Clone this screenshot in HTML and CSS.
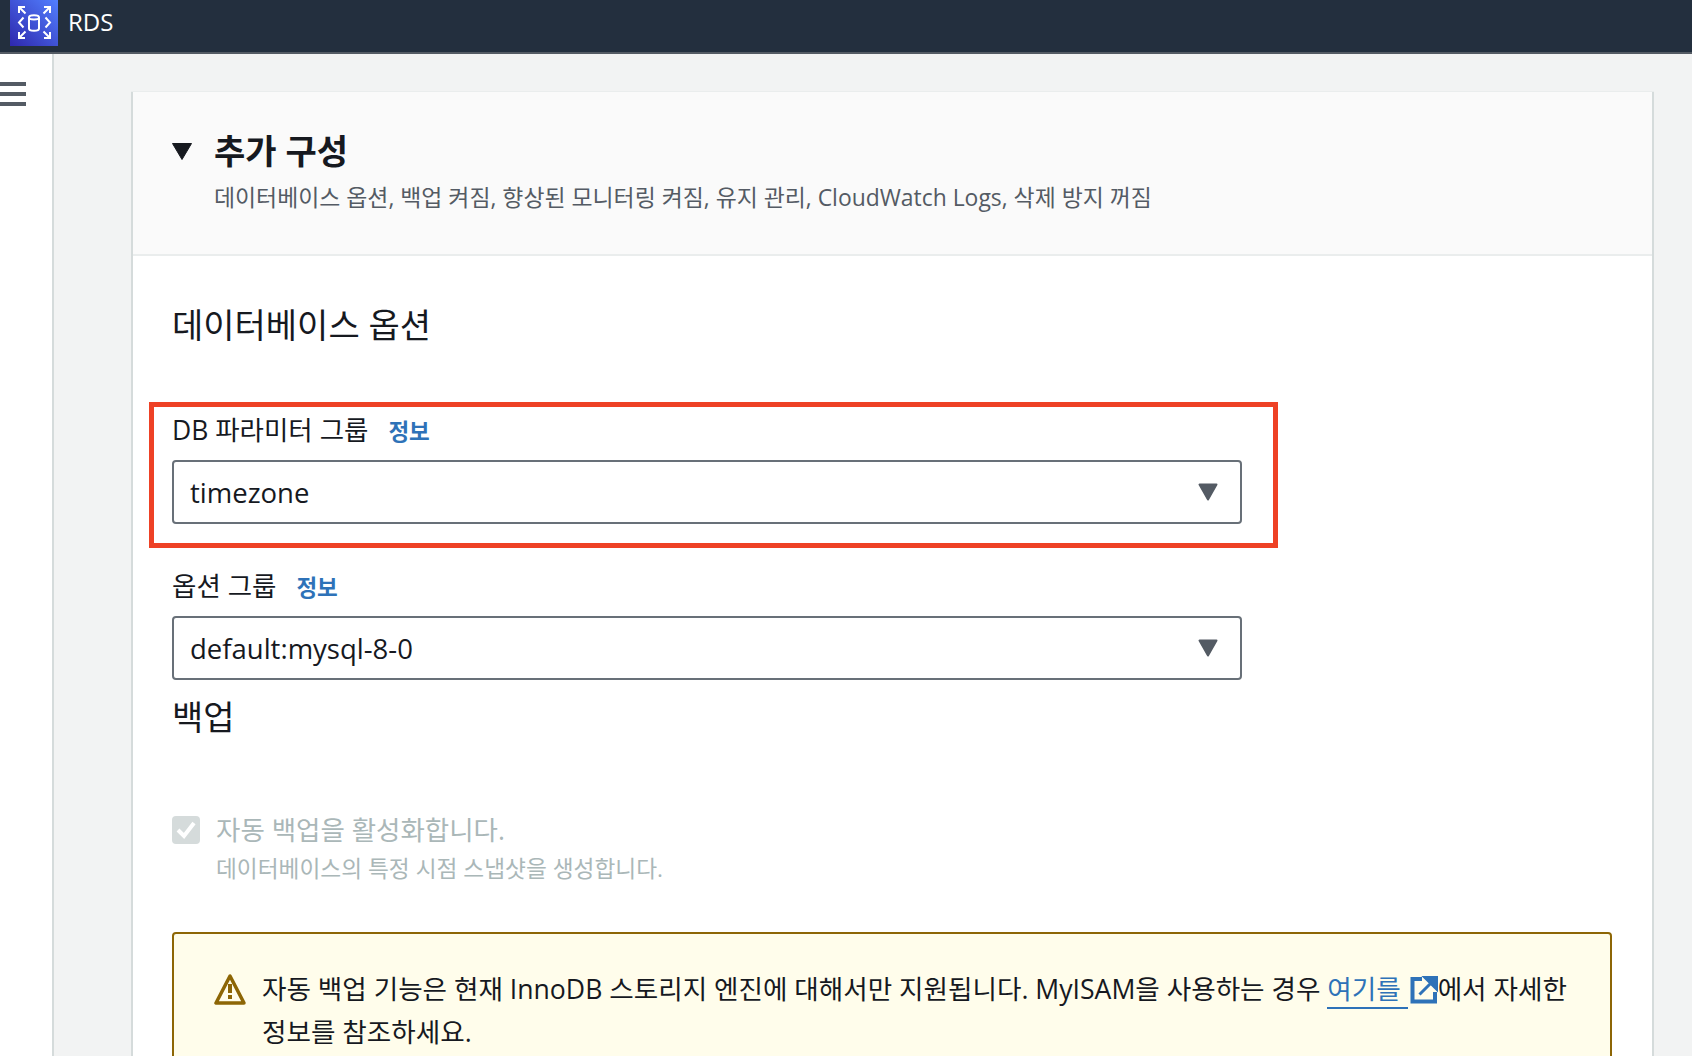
FILE: index.html
```html
<!DOCTYPE html>
<html lang="ko">
<head>
<meta charset="utf-8">
<title>RDS</title>
<link rel="stylesheet" href="styles.css">
</head>
<body>
<header class="topbar">
  <div class="logo">
    <svg width="48" height="46" viewBox="0 0 48 46">
      <defs><linearGradient id="g" x1="0" y1="1" x2="1" y2="0"><stop offset="0" stop-color="#2e27ad"/><stop offset="1" stop-color="#527fff"/></linearGradient></defs>
      <rect width="48" height="46" fill="url(#g)"/>
      <g fill="none" stroke="#fff" stroke-width="2">
        <path d="M9 13V7h6M9 7l6.500 6.500M40 13V7h-6M40 7l-6.500 6.500M9 32v6h6M9 38l6.500-6.500M40 32v6h-6M40 38l-6.500-6.500"/>
        <path d="M13.500 17.500L9 22.500l4.500 5M35.500 17.500L40 22.500l-4.500 5"/>
        <path d="M19 17.500c0-3 10-3 10 0v11c0 3-10 3-10 0zM19 17.500c0 2.500 10 2.500 10 0"/>
      </g>
    </svg>
  </div>
  <span class="service">RDS</span>
</header>
<div class="layout">
  <aside class="side">
    <div class="burger"><span></span><span></span><span></span></div>
  </aside>
  <main class="main">
    <section class="card">
      <div class="card-head">
        <svg class="caret" width="20" height="17" viewBox="0 0 20 17"><path d="M.5 .5h19L10 16.500z" fill="#16191f" stroke="#16191f" stroke-width="1" stroke-linejoin="round"/></svg>
        <div>
          <h2 class="title">추가 구성</h2>
          <p class="summary">데이터베이스 옵션, 백업 켜짐, 향상된 모니터링 켜짐, 유지 관리, CloudWatch Logs, 삭제 방지 꺼짐</p>
        </div>
      </div>
      <div class="card-body">
        <h3 class="section">데이터베이스 옵션</h3>
        <div class="field field-first">
          <div class="marker"></div>
          <div class="label">DB 파라미터 그룹<a class="info">정보</a></div>
          <div class="select"><span>timezone</span><svg width="20" height="18" viewBox="0 0 20 18"><path d="M1.500 1.500h17L10 16.500z" fill="#545b64" stroke="#545b64" stroke-width="2" stroke-linejoin="round"/></svg></div>
        </div>
        <div class="field field-second">
          <div class="label">옵션 그룹<a class="info">정보</a></div>
          <div class="select"><span>default:mysql-8-0</span><svg width="20" height="18" viewBox="0 0 20 18"><path d="M1.500 1.500h17L10 16.500z" fill="#545b64" stroke="#545b64" stroke-width="2" stroke-linejoin="round"/></svg></div>
        </div>
        <h3 class="section section-backup">백업</h3>
        <div class="check-row">
          <div class="checkbox"><svg width="28" height="28" viewBox="0 0 28 28"><path d="M6 14l6 6 10-13" fill="none" stroke="#fff" stroke-width="4"/></svg></div>
          <div>
            <div class="check-title">자동 백업을 활성화합니다.</div>
            <div class="check-desc">데이터베이스의 특정 시점 스냅샷을 생성합니다.</div>
          </div>
        </div>
        <div class="alert">
          <svg class="warn" width="32" height="32" viewBox="0 0 32 32"><path d="M16 3L2 30h28z" fill="none" stroke="#8d6605" stroke-width="3.500" stroke-linejoin="round"/><path d="M14 11h4v9h-4zM14 22h4v4h-4z" fill="#8d6605"/></svg>
          <p class="alert-text">자동 백업 기능은 현재 InnoDB 스토리지 엔진에 대해서만 지원됩니다. MyISAM을 사용하는 경우 <a class="ext">여기를 </a><svg class="ext-icon" width="28" height="28" viewBox="0 0 28 28"><path d="M12 3H2.500v22.500H25V16" fill="none" stroke="#2e72b8" stroke-width="4"/><path d="M15 1.500h11.500V13zM9.500 18.500L20 8" fill="#2e72b8" stroke="#2e72b8" stroke-width="3"/></svg>에서 자세한 정보를 참조하세요.</p>
        </div>
      </div>
    </section>
  </main>
</div>
</body>
</html>
```
FILE: styles.css
```css
* { box-sizing: border-box; }
html, body { margin: 0; height: 1056px; overflow: hidden; }
body {
  font-family: "Open Sans", "Noto Sans CJK KR", sans-serif;
  color: #16191f;
  background: #f2f3f3;
  display: flex;
  flex-direction: column;
}
h2, h3, p { margin: 0; font-weight: 400; }

.topbar {
  height: 54px;
  flex: none;
  display: flex;
  background: #232f3e;
  border-bottom: 2px solid #545b64;
  padding-left: 10px;
}
.logo { height: 46px; }
.logo svg { display: block; }
.service { margin-left: 10px; color: #fff; font-size: 24px; line-height: 44px; }

.layout { flex: 1; display: flex; min-height: 0; }
.side {
  width: 54px;
  flex: none;
  background: #fff;
  border-right: 2px solid #d5dbdb;
  padding-top: 28px;
}
.burger { width: 26px; display: flex; flex-direction: column; gap: 6px; }
.burger span { height: 4px; background: #545b64; }

.main { flex: 1; padding: 38px 38px 0 77px; min-width: 0; }
.card {
  background: #fff;
  border-left: 2px solid #d5dbdb;
  border-right: 2px solid #d5dbdb;
  box-shadow: 0 -1px 0 #eaeded;
  height: 1100px;
}
.card-head {
  height: 164px;
  background: #fafafa;
  border-bottom: 2px solid #eaeded;
  padding: 37px 39px 0;
  display: flex;
  gap: 22px;
}
.caret { margin-top: 14px; flex: none; }
.title { font-size: 34px; font-weight: 700; line-height: 44px; }
.summary { font-size: 22.900px; line-height: 30px; margin-top: 10px; color: #545b64; }

.card-body { padding: 0 39px; }
.section { font-size: 34px; line-height: 44px; }
.card-body > .section:first-child { padding-top: 47px; height: 91px; }

.field { position: relative; width: 1070px; }
.field-first { margin-top: 65px; }
.field-second { margin-top: 44px; }
.marker {
  position: absolute;
  left: -23px;
  right: -36px;
  top: -10px;
  bottom: -24px;
  border: 5px solid #ee4125;
  pointer-events: none;
}
.label { font-size: 26.5px; line-height: 36px; height: 48px; }
.info { margin-left: 20px; font-size: 22.500px; font-weight: 700; color: #2e72b8; }
.select {
  height: 64px;
  background: #fff;
  border: 2px solid #687078;
  border-radius: 4px;
  padding: 0 22px 0 16px;
  display: flex;
  align-items: center;
  justify-content: space-between;
  font-size: 27.500px;
}

.section-backup { margin-top: 15px; }
.check-row { display: flex; gap: 16px; margin-top: 72px; }
.checkbox {
  width: 28px;
  height: 28px;
  background: #d5dbdb;
  border-radius: 4px;
  margin-top: 5px;
  flex: none;
}
.checkbox svg { display: block; }
.check-title { font-size: 26.500px; line-height: 38px; color: #aab7b8; }
.check-desc { font-size: 22.700px; line-height: 34px; color: #aab7b8; margin-top: 3px; }

.alert {
  width: 1440px;
  margin-top: 46px;
  height: 200px;
  border: 2px solid #8d6605;
  border-radius: 4px;
  background: #fffdeb;
  padding: 34px 30px 34px 40px;
  display: flex;
  gap: 16px;
}
.warn { flex: none; margin-top: 5px; }
.alert-text { font-size: 26.600px; line-height: 43px; word-break: keep-all; }
.ext { color: #2e72b8; border-bottom: 2px solid #2e72b8; }
.ext-icon { vertical-align: -5px; margin-left: 2px; }
```
